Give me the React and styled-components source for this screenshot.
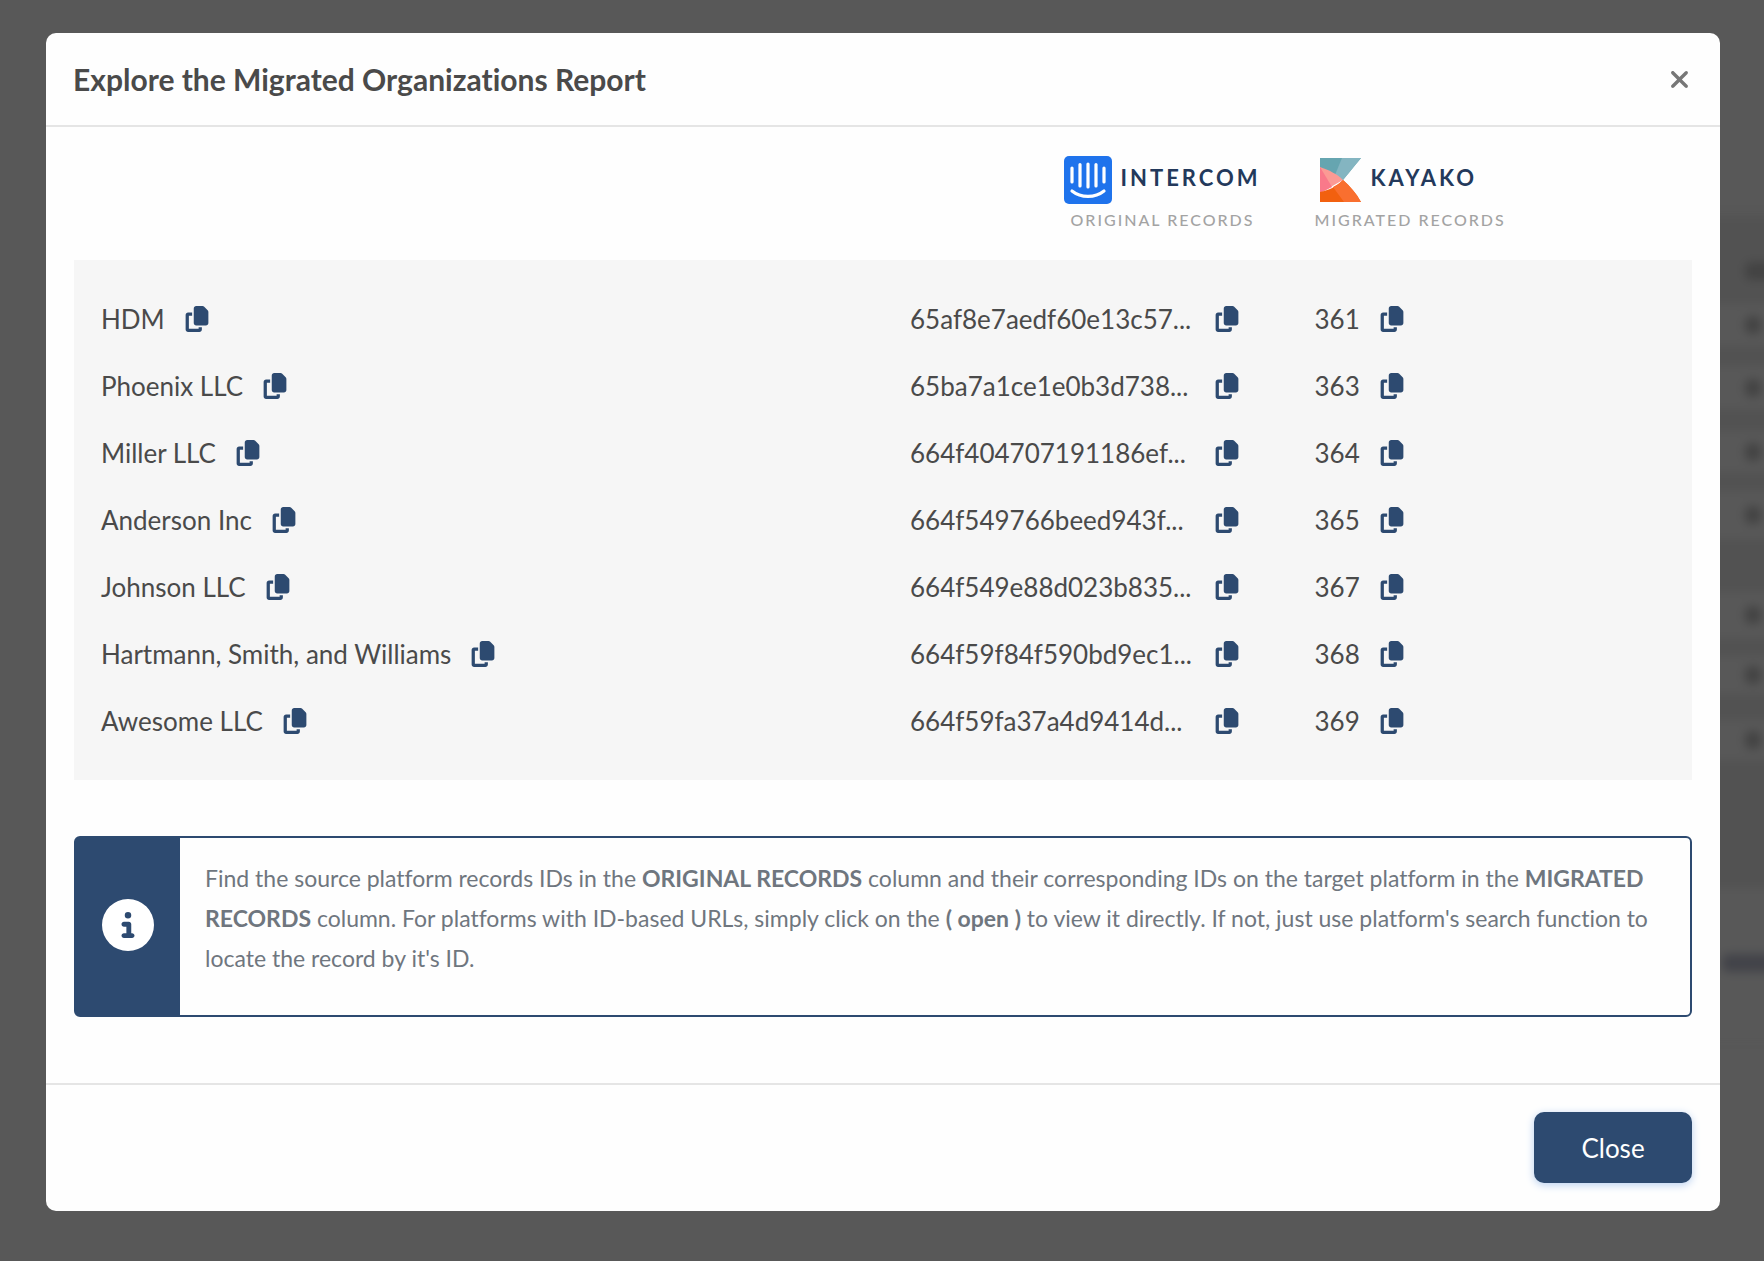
import React from "react";
import styled, { createGlobalStyle } from "styled-components";
import { FaCopy, FaCircleInfo, FaXmark } from "react-icons/fa6";

const GlobalStyle = createGlobalStyle`
  *, *::before, *::after { box-sizing: border-box; }
  body {
    margin: 0;
    background: #585858;
    color: #4a4a4a;
    font-family: Lato, "Liberation Sans", sans-serif;
    font-variant-ligatures: none;
  }
`;

const Overlay = styled.div`
  position: relative;
  min-height: 100vh;
  padding: 33px 44px 50px 46px;
  overflow: hidden;
`;

const PageBehind = styled.div`
  position: absolute;
  top: 216px;
  right: -20px;
  width: 90px;
  filter: blur(5px);
`;

const BehindRow = styled.div`
  display: flex;
  align-items: center;
  justify-content: flex-end;
  height: ${(p) => p.$height}px;
  padding-right: ${(p) => (p.$bleed ? 0 : 23)}px;
  background: ${(p) => (p.$shade ? "#525252" : "#585858")};
`;

const BehindMark = styled.span`
  width: ${(p) => p.$width}px;
  height: 18px;
  border-radius: 6px;
  background: ${(p) => p.$color || "#434343"};
`;

const Dialog = styled.section`
  position: relative;
  border-radius: 10px;
  background: #fefefe;
`;

const DialogHeader = styled.header`
  display: flex;
  align-items: center;
  justify-content: space-between;
  height: 94px;
  padding: 0 27px;
  border-bottom: 2px solid #e5e5e5;
`;

const Title = styled.h1`
  margin: 0;
  font-size: 30px;
  line-height: 40px;
  font-weight: 700;
`;

const IconButton = styled.button`
  display: flex;
  flex: none;
  padding: 0;
  border: 0;
  background: none;
  color: ${(p) => p.$color};
  font-size: ${(p) => p.$size}px;
  cursor: pointer;
`;

const DialogBody = styled.div`
  padding: 29px 28px 66px;
`;

const Records = styled.table`
  width: 100%;
  border-collapse: collapse;
  table-layout: fixed;

  th, td { padding: 0 27px; text-align: left; }
  thead th { height: 104px; vertical-align: top; }
  tbody { background: #f6f6f6; }
  tbody td, tbody th { height: 67px; font-weight: 400; }
  tbody tr:first-child > * { height: 92px; padding-top: 25px; }
  tbody tr:last-child > * { height: 93px; padding-bottom: 26px; }
`;

const Col = styled.col`
  width: ${(p) => p.$width};
`;

const PlatformCell = styled.div`
  display: flex;
  justify-content: ${(p) => (p.$end ? "flex-end" : "flex-start")};
`;

const Platform = styled.div`
  display: flex;
  flex-direction: column;
  gap: 4px;
  align-items: ${(p) => (p.$end ? "center" : "flex-start")};
`;

const Brand = styled.div`
  display: flex;
  align-items: flex-start;
  gap: 8px;
  color: #23395b;
  font-size: 22px;
  line-height: 44px;
  font-weight: 700;
  letter-spacing: 3px;
`;

const Caption = styled.div`
  color: #a3a3a3;
  font-size: 16px;
  line-height: 24px;
  font-weight: 500;
  letter-spacing: 2px;
  white-space: nowrap;
`;

const Value = styled.div`
  display: flex;
  align-items: center;
  gap: 19px;
  font-size: 26px;
  line-height: 32px;
`;

const RecordId = styled.span`
  width: 285px;
  white-space: nowrap;
`;

const Notice = styled.aside`
  display: flex;
  margin-top: 56px;
  border: 2px solid #2d4a70;
  border-radius: 6px;
`;

const NoticeIcon = styled.div`
  display: flex;
  flex: none;
  align-items: center;
  justify-content: center;
  width: 104px;
  padding-bottom: 4px;
  background: #2d4a70;
  color: #fff;
  font-size: 52px;
`;

const NoticeText = styled.p`
  margin: 0;
  padding: 20px 25px 37px;
  color: #6f767e;
  font-size: 23px;
  line-height: 40px;
`;

const DialogFooter = styled.footer`
  display: flex;
  justify-content: flex-end;
  padding: 27px 28px 28px;
  border-top: 2px solid #e5e5e5;
`;

const CloseButton = styled.button`
  width: 158px;
  height: 71px;
  border: 0;
  border-radius: 10px;
  background: #2d4a70;
  box-shadow: 0 2px 8px #b9d0f0;
  color: #fff;
  font: 26px Lato, "Liberation Sans", sans-serif;
  cursor: pointer;
`;

const IntercomLogo = () => (
  <svg width="48" height="48" viewBox="0 0 48 48" aria-hidden="true">
    <rect width="48" height="48" rx="5" fill="#1f73ec" />
    <g fill="none" stroke="#fff" strokeWidth="3.2" strokeLinecap="round">
      <path d="M8 12v14M16 8.500v21.500M24 8v23M32 8.500v21.500M40 12v14" />
      <path d="M8 35c9 7.200 23 7.200 32 0" />
    </g>
  </svg>
);

const KayakoLogo = () => (
  <svg width="48" height="48" viewBox="0 0 48 48" aria-hidden="true">
    <path d="M5 2h41L28 24 5 12z" fill="#66a5b0" />
    <path d="M27 2h19L28 24l-8-5z" fill="#84b5c1" />
    <path d="M5 11c9 3 17 7 23 13L5 37z" fill="#fb9a94" />
    <path d="M5 11l12 20-12 6z" fill="#f9798a" />
    <path d="M5 36c9-2 16-5 23-12 7 6 13 13 18 22H5z" fill="#f2600f" />
    <path d="M18 31c4-2 7-4 10-7 7 6 13 13 18 22H29z" fill="#f96f2f" />
  </svg>
);

const rows = [
  ["HDM", "65af8e7aedf60e13c57...", "361"],
  ["Phoenix LLC", "65ba7a1ce1e0b3d738...", "363"],
  ["Miller LLC", "664f404707191186ef...", "364"],
  ["Anderson Inc", "664f549766beed943f...", "365"],
  ["Johnson LLC", "664f549e88d023b835...", "367"],
  ["Hartmann, Smith, and Williams", "664f59f84f590bd9ec1...", "368"],
  ["Awesome LLC", "664f59fa37a4d9414d...", "369"],
];

const behind = [
  { height: 22, shade: true },
  { height: 66, shade: true, mark: 39, bleed: true },
  { height: 42, mark: 16 },
  { height: 20, shade: true },
  { height: 43, mark: 16 },
  { height: 22, shade: true },
  { height: 41, mark: 16 },
  { height: 19, shade: true },
  { height: 48, mark: 16 },
  { height: 53, shade: true },
  { height: 46, mark: 16 },
  { height: 18, shade: true },
  { height: 38, mark: 16 },
  { height: 26, shade: true },
  { height: 40, mark: 16 },
  { height: 128, shade: true },
  { height: 150, mark: 62, bleed: true, color: "#424349" },
];

const CopyButton = () => (
  <IconButton type="button" $color="#2d4a70" $size={26} aria-label="Copy">
    <FaCopy width={23} height={26} />
  </IconButton>
);

export default function App() {
  return (
    <Overlay>
      <GlobalStyle />
      <PageBehind aria-hidden="true">
        {behind.map((r, i) => (
          <BehindRow key={i} $height={r.height} $shade={r.shade} $bleed={r.bleed}>
            {r.mark && <BehindMark $width={r.mark} $color={r.color} />}
          </BehindRow>
        ))}
      </PageBehind>
      <Dialog role="dialog" aria-labelledby="report-title">
        <DialogHeader>
          <Title id="report-title">Explore the Migrated Organizations Report</Title>
          <IconButton type="button" $color="#777" $size={27} aria-label="Dismiss">
            <FaXmark />
          </IconButton>
        </DialogHeader>
        <DialogBody>
          <Records>
            <colgroup>
              <Col $width="50%" />
              <Col $width="25%" />
              <Col $width="25%" />
            </colgroup>
            <thead>
              <tr>
                <td />
                <th scope="col">
                  <PlatformCell $end>
                    <Platform $end>
                      <Brand><IntercomLogo />INTERCOM</Brand>
                      <Caption>ORIGINAL RECORDS</Caption>
                    </Platform>
                  </PlatformCell>
                </th>
                <th scope="col">
                  <PlatformCell>
                    <Platform>
                      <Brand><KayakoLogo />KAYAKO</Brand>
                      <Caption>MIGRATED RECORDS</Caption>
                    </Platform>
                  </PlatformCell>
                </th>
              </tr>
            </thead>
            <tbody>
              {rows.map(([name, original, migrated]) => (
                <tr key={migrated}>
                  <th scope="row"><Value>{name}<CopyButton /></Value></th>
                  <td><Value><RecordId>{original}</RecordId><CopyButton /></Value></td>
                  <td><Value>{migrated}<CopyButton /></Value></td>
                </tr>
              ))}
            </tbody>
          </Records>
          <Notice>
            <NoticeIcon><FaCircleInfo /></NoticeIcon>
            <NoticeText>
              Find the source platform records IDs in the <b>ORIGINAL RECORDS</b> column and
              their corresponding IDs on the target platform in the <b>MIGRATED RECORDS</b> column.
              For platforms with ID-based URLs, simply click on the <b>( open )</b> to view it
              directly. If not, just use platform's search function to locate the record by it's ID.
            </NoticeText>
          </Notice>
        </DialogBody>
        <DialogFooter>
          <CloseButton type="button">Close</CloseButton>
        </DialogFooter>
      </Dialog>
    </Overlay>
  );
}
